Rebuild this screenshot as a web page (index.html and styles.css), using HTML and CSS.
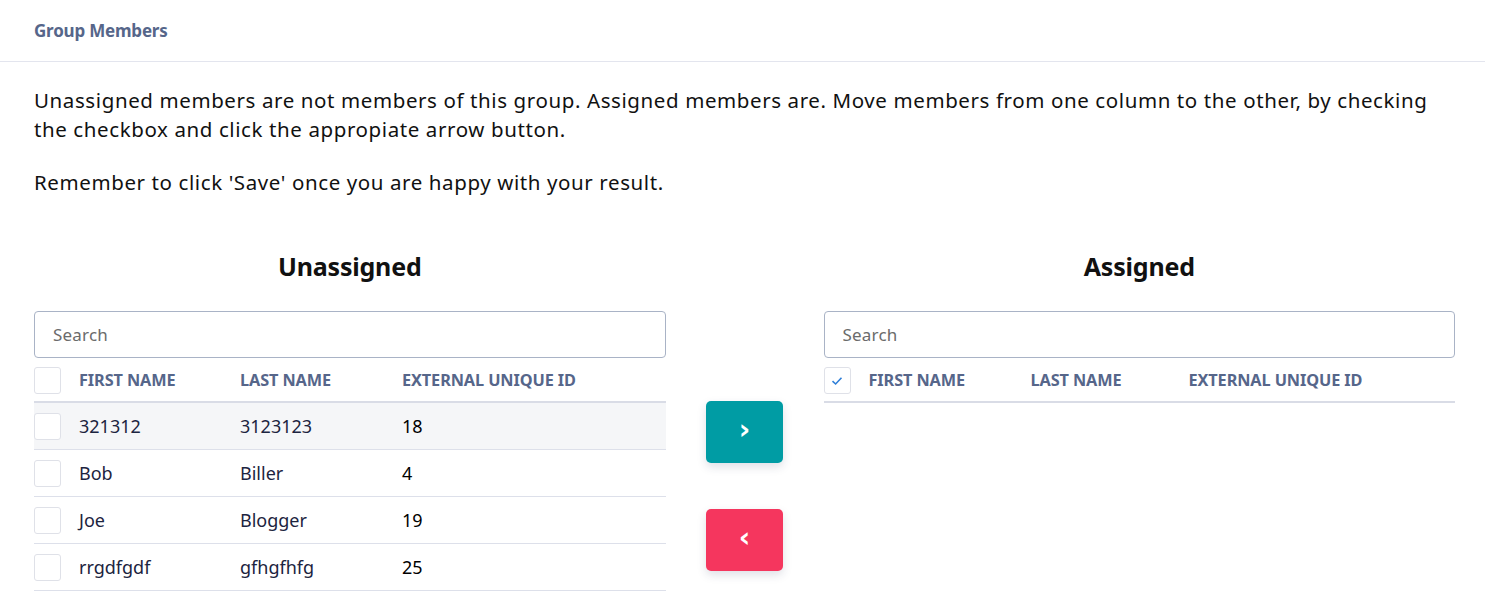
FILE: index.html
```html
<!DOCTYPE html>
<html>
<head>
<meta charset="utf-8">
<link rel="stylesheet" href="styles.css">
</head>
<body>
<header class="top">
  <h1 class="title">Group Members</h1>
</header>
<main class="content">
  <p class="intro">Unassigned members are not members of this group. Assigned members are. Move members from one column to the other, by checking the checkbox and click the appropiate arrow button.</p>
  <p class="intro">Remember to click 'Save' once you are happy with your result.</p>

  <div class="columns">
    <section class="panel">
      <h2 class="panel-title">Unassigned</h2>
      <input class="search" type="text" placeholder="Search">
      <div class="table">
        <div class="row head">
          <span class="box"></span>
          <span>FIRST NAME</span>
          <span>LAST NAME</span>
          <span>EXTERNAL UNIQUE ID</span>
        </div>
        <div class="row hover">
          <span class="box"></span>
          <span class="name">321312</span>
          <span class="name">3123123</span>
          <span class="id">18</span>
        </div>
        <div class="row">
          <span class="box"></span>
          <span class="name">Bob</span>
          <span class="name">Biller</span>
          <span class="id">4</span>
        </div>
        <div class="row">
          <span class="box"></span>
          <span class="name">Joe</span>
          <span class="name">Blogger</span>
          <span class="id">19</span>
        </div>
        <div class="row">
          <span class="box"></span>
          <span class="name">rrgdfgdf</span>
          <span class="name">gfhgfhfg</span>
          <span class="id">25</span>
        </div>
      </div>
    </section>

    <div class="actions">
      <button class="move right" type="button">&#8250;</button>
      <button class="move left" type="button">&#8249;</button>
    </div>

    <section class="panel">
      <h2 class="panel-title">Assigned</h2>
      <input class="search" type="text" placeholder="Search">
      <div class="table">
        <div class="row head alt">
          <span class="box checked"><svg width="12" height="10" viewBox="0 0 12 10"><path d="M1.5 5.2 L4.6 8 L10.5 1.8" fill="none" stroke="#2f7fd8" stroke-width="1.6"/></svg></span>
          <span>FIRST NAME</span>
          <span>LAST NAME</span>
          <span>EXTERNAL UNIQUE ID</span>
        </div>
      </div>
    </section>
  </div>
</main>
</body>
</html>
```
FILE: styles.css
```css
* { box-sizing: border-box; }
html, body { margin: 0; padding: 0; background: #fff; }
body {
  font-family: "Noto Sans", "Liberation Sans", sans-serif;
  color: #111;
  overflow: hidden;
}
.top {
  height: 62px;
  border-bottom: 1px solid #e3e5ee;
  padding: 0 34px;
  display: flex;
  align-items: center;
}
.title {
  margin: 0;
  font-size: 17px;
  font-weight: 700;
  color: #56668a;
  letter-spacing: -0.2px;
}
.content {
  padding: 24px 30px 0 34px;
}
.intro {
  margin: 0 0 24px;
  font-size: 20.5px;
  line-height: 29px;
  color: #111;
  letter-spacing: 0.6px;
}
.columns {
  display: grid;
  grid-template-columns: 1fr 158px 1fr;
  margin-top: 53px;
}
.panel-title {
  margin: 0 0 29px;
  text-align: center;
  font-size: 25px;
  line-height: 32px;
  font-weight: 700;
  color: #111;
  letter-spacing: -0.2px;
}
.search {
  display: block;
  width: 100%;
  height: 47px;
  border: 1px solid #a9b3c6;
  border-radius: 4px;
  padding: 0 18px;
  font-family: "Noto Sans", sans-serif;
  font-size: 17px;
  color: #333;
  outline: none;
  letter-spacing: 0.2px;
}
.search::placeholder { color: #6b6b6b; }
.table { margin-top: 8px; }
.row {
  display: grid;
  grid-template-columns: 45px 161px 162px 1fr;
  align-items: center;
  height: 47px;
  border-bottom: 1px solid #dde0ea;
  font-size: 18px;
}
.row.head {
  height: 37px;
  border-bottom: 2px solid #d9dce6;
  align-items: start;
  padding-top: 1px;
  font-size: 16.3px;
  font-weight: 700;
  color: #56668a;
  letter-spacing: -0.1px;
}
.row.head span:not(.box) { line-height: 26px; }
.row.head.alt { grid-template-columns: 45px 162px 158px 1fr; }
.row.hover { background: #f5f6f8; }
.box {
  width: 27px;
  height: 27px;
  border: 1px solid #dfe1e8;
  border-radius: 3px;
  background: #fff;
  display: flex;
  align-items: center;
  justify-content: center;
}
.name { color: #1c2440; }
.id { color: #000; }
.actions {
  display: flex;
  flex-direction: column;
  align-items: center;
  gap: 46px;
  padding-top: 151px;
}
.move {
  width: 77px;
  height: 62px;
  border: none;
  border-radius: 5px;
  color: #fff;
  font-size: 28px;
  font-weight: 700;
  font-family: "DejaVu Sans", sans-serif;
  box-shadow: 0 4px 10px rgba(40, 50, 90, 0.15);
  line-height: 1;
  padding: 0 0 4px;
}
.move.right { background: #009ca4; }
.move.left { background: #f5365e; }
```
